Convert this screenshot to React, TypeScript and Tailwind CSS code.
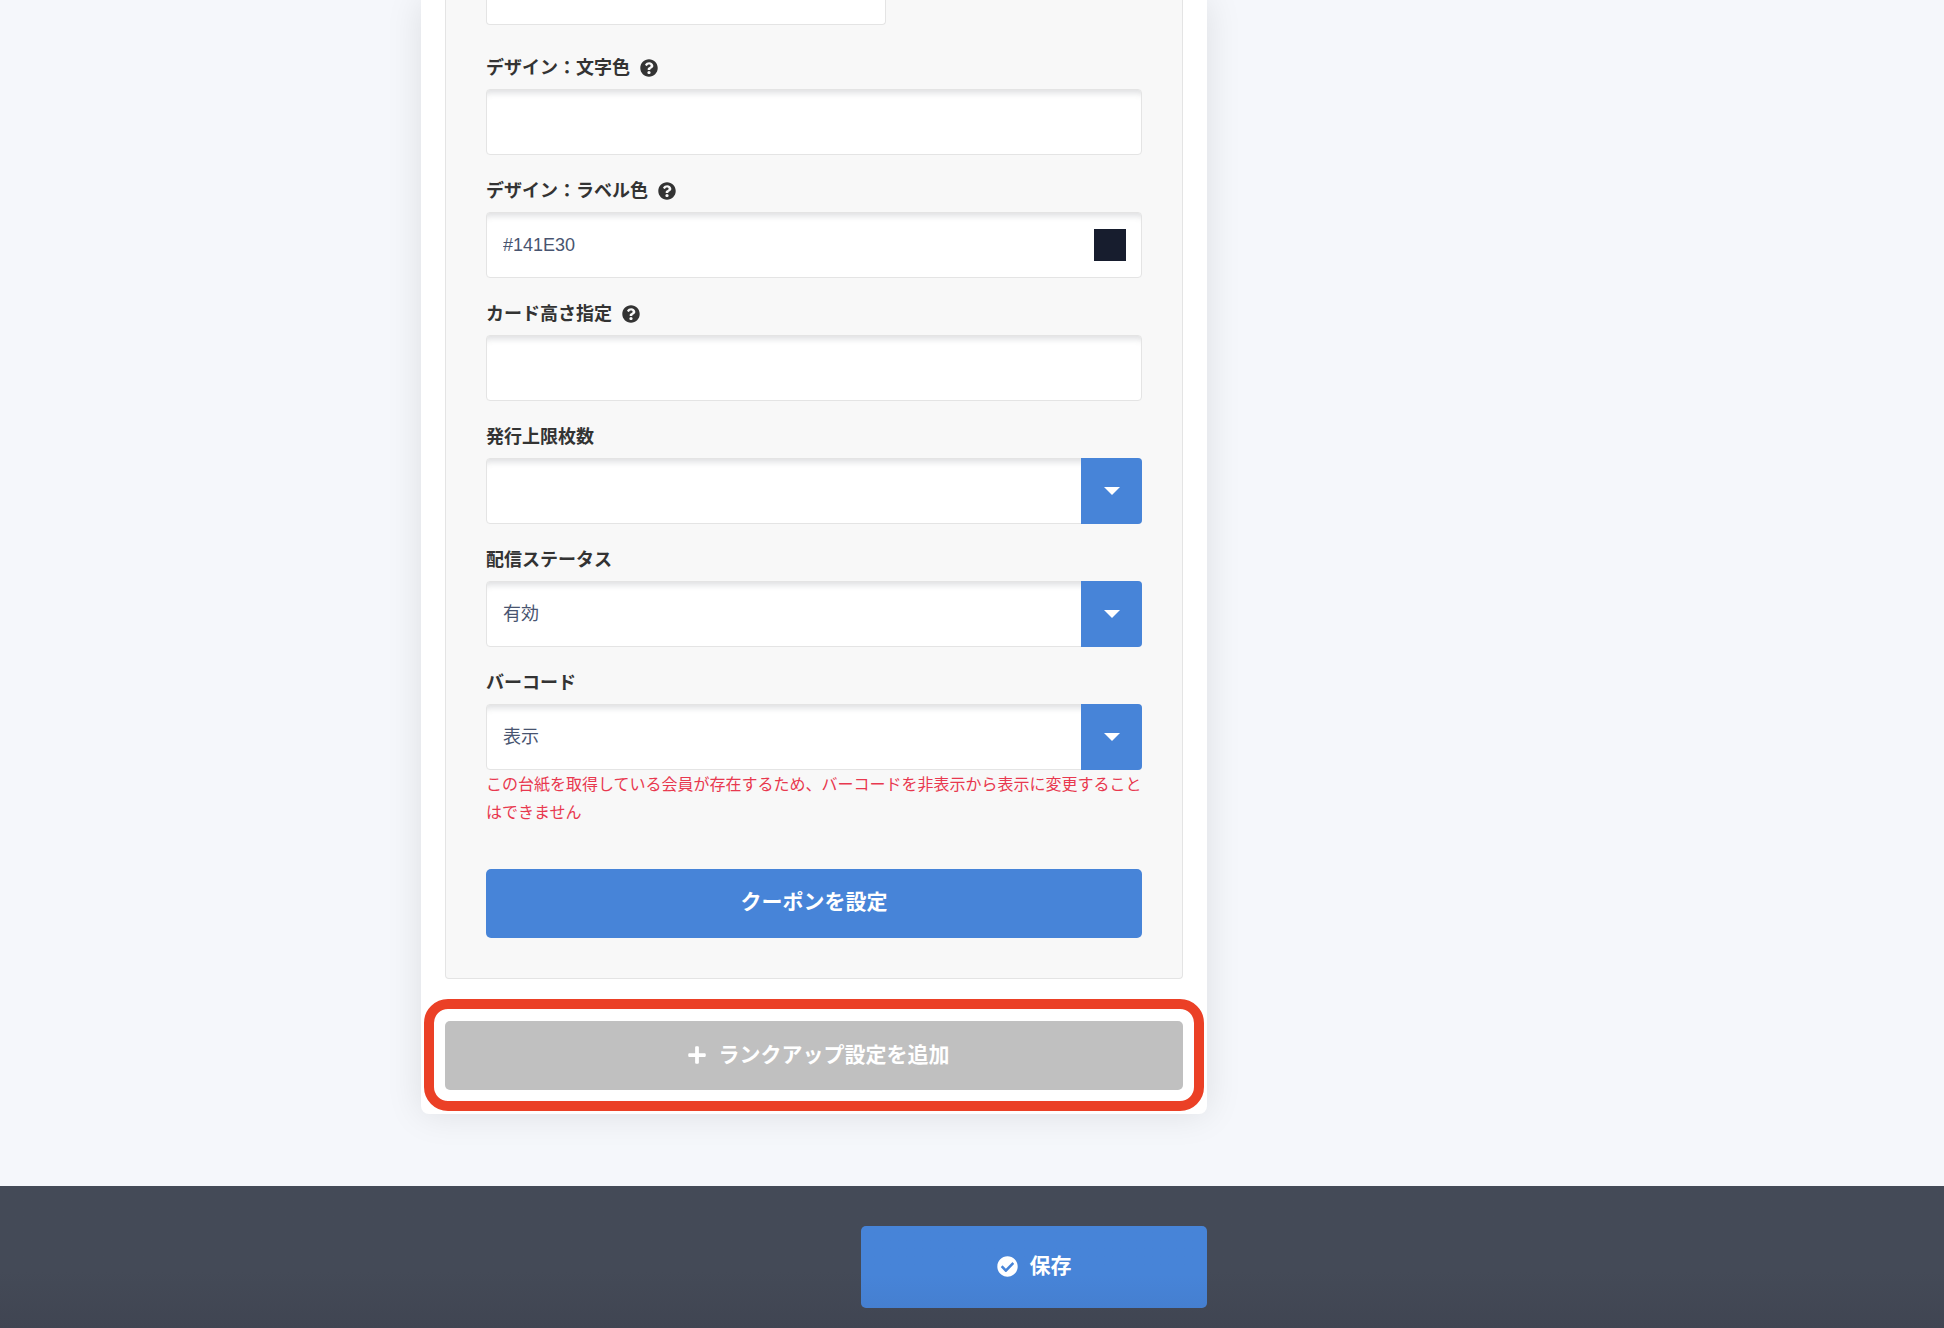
import type { ReactNode } from "react"
import { FaCheckCircle, FaPlus, FaQuestionCircle } from "react-icons/fa"

const fieldClass =
    "block h-[66px] w-full appearance-none rounded border border-[#e4e4e4] bg-white px-4 text-lg text-[#485470] shadow-[inset_0_9px_6px_-6px_rgba(70,80,90,0.18)] outline-none"

interface FieldProps {
    id: string
    label: string
    help?: boolean
    children: ReactNode
}

function Field({ id, label, help, children }: FieldProps) {
    return (
        <div className="pt-6">
            <div className="mb-[9px] flex h-6 items-center gap-2.5">
                <label htmlFor={id} className="text-lg leading-6 font-bold text-[#333]">
                    {label}
                </label>
                {help && <FaQuestionCircle className="size-[18px] text-[#333]" />}
            </div>
            {children}
        </div>
    )
}

interface SelectBoxProps {
    id: string
    options: string[]
    describedBy?: string
}

function SelectBox({ id, options, describedBy }: SelectBoxProps) {
    return (
        <div className="relative">
            <select id={id} aria-describedby={describedBy} className={fieldClass}>
                {options.map((option) => (
                    <option key={option}>{option}</option>
                ))}
            </select>
            {/* Arrow box over the native select */}
            <span className="pointer-events-none absolute inset-y-0 right-0 flex w-[61px] items-center justify-center rounded-r bg-[#4784d8]">
                <svg viewBox="0 0 16 8" className="h-2 w-4 fill-white">
                    <path d="M0 0h16L8 8z" />
                </svg>
            </span>
        </div>
    )
}

export default function App() {
    return (
        <div className="flex min-h-screen flex-col bg-[#f5f7fb] font-['Liberation_Sans','Noto_Sans_CJK_JP',sans-serif]">
            <main className="mx-auto w-full max-w-[1102px] pb-[72px]">
                <div className="w-full max-w-[786px] rounded-b-lg bg-white px-6 pb-6 shadow-[0_0_36px_rgba(0,0,0,0.1)]">
                    {/* Card settings */}
                    <section className="rounded-b border border-t-0 border-[#e4e4e4] bg-[#f8f8f8] px-10 pb-10">
                        <input
                            type="text"
                            aria-label="デザイン"
                            className="mb-[7px] block h-[25px] w-full max-w-[400px] rounded-b border border-t-0 border-[#e4e4e4] bg-white px-4 text-lg outline-none"
                        />
                        <Field id="text-color" label="デザイン：文字色" help>
                            <input id="text-color" type="text" className={fieldClass} />
                        </Field>
                        <Field id="label-color" label="デザイン：ラベル色" help>
                            <div className="relative">
                                <input id="label-color" type="text" defaultValue="#141E30" className={fieldClass} />
                                <span className="absolute top-[17px] right-4 size-8 bg-[#171d2e]" />
                            </div>
                        </Field>
                        <Field id="card-height" label="カード高さ指定" help>
                            <input id="card-height" type="text" className={fieldClass} />
                        </Field>
                        <Field id="issue-limit" label="発行上限枚数">
                            <SelectBox id="issue-limit" options={[""]} />
                        </Field>
                        <Field id="status" label="配信ステータス">
                            <SelectBox id="status" options={["有効", "無効"]} />
                        </Field>
                        <Field id="barcode" label="バーコード">
                            <SelectBox id="barcode" options={["表示", "非表示"]} describedBy="barcode-note" />
                        </Field>
                        <p id="barcode-note" className="pt-px text-base leading-7 text-[#e8384f]">
                            この台紙を取得している会員が存在するため、バーコードを非表示から表示に変更することはできません
                        </p>
                        <button
                            type="button"
                            className="mt-[42px] h-[69px] w-full rounded-[5px] bg-[#4784d8] pb-1 text-[21px] font-bold text-white"
                        >
                            クーポンを設定
                        </button>
                    </section>

                    {/* Add rank-up */}
                    <div className="relative mt-[42px]">
                        <button
                            type="button"
                            className="flex h-[69px] w-full items-center justify-center gap-3 rounded-[5px] bg-[#c0c0c0] pb-0.5 pl-2 text-[21px] font-bold text-white"
                        >
                            <FaPlus className="size-5" />
                            ランクアップ設定を追加
                        </button>
                        <div className="pointer-events-none absolute -inset-x-[21px] -top-[22px] -bottom-[21px] rounded-3xl border-10 border-[#eb4026]" />
                    </div>
                </div>
            </main>

            <footer className="flex-1 bg-linear-to-b from-[#444a57] from-60% to-[#404552] pt-10 pb-5">
                <div className="mx-auto w-full max-w-[1102px]">
                    <div className="flex w-full max-w-[786px] justify-end">
                        <button
                            type="button"
                            className="flex h-[82px] w-[346px] items-center justify-center gap-3 rounded-[5px] bg-linear-to-b from-[#4784d8] from-60% to-[#457fd0] pb-0.5 text-[21px] font-bold text-white"
                        >
                            <FaCheckCircle className="size-[21px]" />
                            保存
                        </button>
                    </div>
                </div>
            </footer>
        </div>
    )
}
